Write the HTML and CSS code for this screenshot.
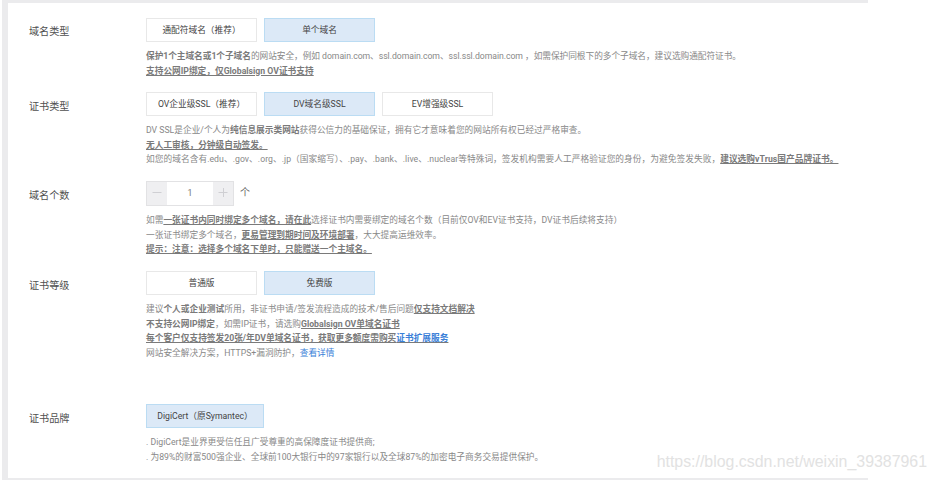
FILE: index.html
```html
<!DOCTYPE html>
<html lang="zh-CN">
<head>
    <meta charset="UTF-8">
    <meta name="viewport" content="width=device-width, initial-scale=1.0">
    <title>证书选购</title>
    <link rel="stylesheet" href="styles.css">
</head>
<body>
    <div class="panel">
        <div class="row row-domain">
            <div class="label">域名类型</div>
            <div class="content">
                <div class="options">
                    <div class="option">通配符域名（推荐）</div>
                    <div class="option active">单个域名</div>
                </div>
                <div class="desc">
                    <p class="tight"><b>保护1个主域名或1个子域名</b>的网站安全，例如 domain.com、ssl.domain.com、ssl.ssl.domain.com ，如需保护同根下的多个子域名，建议选购通配符证书。</p>
                    <p><b><u>支持公网IP绑定，仅Globalsign OV证书支持</u></b></p>
                </div>
            </div>
        </div>
        <div class="row row-type">
            <div class="label">证书类型</div>
            <div class="content">
                <div class="options">
                    <div class="option">OV企业级SSL（推荐）</div>
                    <div class="option active">DV域名级SSL</div>
                    <div class="option">EV增强级SSL</div>
                </div>
                <div class="desc">
                    <p>DV SSL是企业/个人为<b>纯信息展示类网站</b>获得公信力的基础保证，拥有它才意味着您的网站所有权已经过严格审查。</p>
                    <p><b><u>无人工审核，分钟级自动签发。</u></b></p>
                    <p class="loose">如您的域名含有.edu、.gov、.org、.jp（国家缩写）、.pay、.bank、.live、.nuclear等特殊词，签发机构需要人工严格验证您的身份，为避免签发失败，<b><u>建议选购vTrus国产品牌证书。</u></b></p>
                </div>
            </div>
        </div>
        <div class="row row-count">
            <div class="label">域名个数</div>
            <div class="content">
                <div class="counter">
                    <div class="stepper">
                        <div class="step"><svg width="10" height="10" viewBox="0 0 10 10"><path d="M0.5 5.5H9.5"/></svg></div>
                        <div class="value">1</div>
                        <div class="step"><svg width="10" height="10" viewBox="0 0 10 10"><path d="M0.5 5.5H9.5M5.5 1V10"/></svg></div>
                    </div>
                    <span class="unit">个</span>
                </div>
                <div class="desc">
                    <p>如需<b><u>一张证书内同时绑定多个域名，请在此</u></b>选择证书内需要绑定的域名个数（目前仅OV和EV证书支持，DV证书后续将支持）</p>
                    <p>一张证书绑定多个域名，<b><u>更易管理到期时间及环境部署</u></b>，大大提高运维效率。</p>
                    <p><b><u>提示：注意：选择多个域名下单时，只能赠送一个主域名。</u></b></p>
                </div>
            </div>
        </div>
        <div class="row row-level">
            <div class="label">证书等级</div>
            <div class="content">
                <div class="options">
                    <div class="option">普通版</div>
                    <div class="option active">免费版</div>
                </div>
                <div class="desc">
                    <p>建议<b>个人或企业测试</b>所用，非证书申请/签发流程造成的技术/售后问题<b><u>仅支持文档解决</u></b></p>
                    <p><b>不支持公网IP绑定</b>，如需IP证书，请选购<b><u>Globalsign OV单域名证书</u></b></p>
                    <p><b><u>每个客户仅支持签发20张/年DV单域名证书，获取更多额度需购买<a class="link">证书扩展服务</a></u></b></p>
                    <p>网站安全解决方案，HTTPS+漏洞防护，<a class="link">查看详情</a></p>
                </div>
            </div>
        </div>
        <div class="row row-brand">
            <div class="label">证书品牌</div>
            <div class="content">
                <div class="options">
                    <div class="option brand active">DigiCert（原Symantec）</div>
                </div>
                <div class="desc">
                    <p>. DigiCert是业界更受信任且广受尊重的高保障度证书提供商;</p>
                    <p>. 为89%的财富500强企业、全球前100大银行中的97家银行以及全球87%的加密电子商务交易提供保护。</p>
                </div>
            </div>
        </div>
    </div>
    <div class="watermark">https://blog.csdn.net/weixin_39387961</div>
</body>
</html>
```

FILE: styles.css
```css
* {
    box-sizing: border-box;
}
body {
    margin: 0;
    height: 480px;
    overflow: hidden;
    background: #fff;
    font-family: Roboto, "Noto Sans CJK SC", sans-serif;
    font-size: 8.7px;
    color: #444;
}
.panel {
    width: 866px;
    height: 480px;
    margin-left: 2px;
    padding: 15px 0 0 21px;
    border: solid #ebebed;
    border-width: 3px 0 2px 6px;
}
.row {
    display: flex;
}
.row-domain {
    height: 74px;
}
.row-type {
    height: 89px;
}
.row-count {
    height: 90px;
}
.row-level {
    height: 133px;
}
.label {
    width: 117px;
    flex: none;
    font-size: 10.15px;
    line-height: 29px;
    color: #505050;
}
.row-domain .label {
    line-height: 28px;
}
.options {
    display: flex;
    gap: 7px;
}
.option {
    width: 111px;
    height: 23.5px;
    border: 1px solid #e8e8e8;
    text-align: center;
    line-height: 22px;
    white-space: nowrap;
}
.option.active {
    background: #dce9f7;
    border-color: #bbdcf3;
}
.option.brand {
    width: 118px;
}
.desc {
    margin-top: 7.5px;
    color: #888;
    white-space: nowrap;
}
.row-count .desc {
    margin-top: 7px;
}
.desc p {
    margin: 0;
    height: 14.5px;
    line-height: 14.5px;
}
.desc .tight {
    letter-spacing: -0.05px;
}
.desc .loose {
    letter-spacing: 0.045px;
}
.desc b {
    font-weight: 700;
    color: #7a7a7a;
}
.desc .link {
    color: #3a80d8;
}
.counter {
    display: flex;
    align-items: center;
}
.stepper {
    display: flex;
    width: 88px;
    height: 25px;
    border: 1px solid #e2e2e4;
}
.step {
    display: flex;
    align-items: center;
    justify-content: center;
    width: 20px;
    padding-bottom: 3px;
    background: #efeff1;
}
.step svg {
    fill: none;
    stroke: #cfcfd3;
    stroke-width: 1;
}
.value {
    flex: 1;
    text-align: center;
    line-height: 23px;
    color: #777;
}
.unit {
    margin: 0 0 2px 6px;
    font-size: 10px;
    line-height: 12px;
    color: #666;
}
.watermark {
    position: absolute;
    right: 9px;
    bottom: 8px;
    font-family: "Liberation Sans", Arial, sans-serif;
    font-size: 15.9px;
    line-height: 20px;
    color: #e2e2e2;
}
```
